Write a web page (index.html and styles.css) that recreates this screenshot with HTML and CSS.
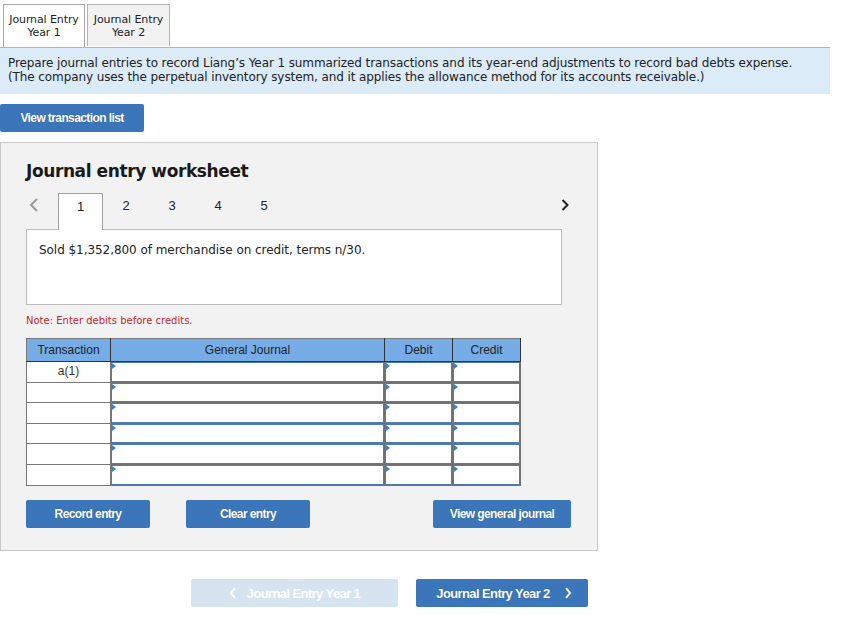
FILE: index.html
```html
<!DOCTYPE html>
<html>
<head>
<meta charset="utf-8">
<link rel="stylesheet" href="styles.css">
</head>
<body>
<div class="tabs">
  <div class="tab active">Journal Entry<br>Year 1</div>
  <div class="tab">Journal Entry<br>Year 2</div>
</div>
<div class="banner">
  Prepare journal entries to record Liang’s Year 1 summarized transactions and its year-end adjustments to record bad debts expense.<br>
  (The company uses the perpetual inventory system, and it applies the allowance method for its accounts receivable.)
</div>
<button class="btn btn-list">View transaction list</button>

<div class="panel">
  <h2 class="title">Journal entry worksheet</h2>
  <div class="pager">
    <span class="chev prev"><svg width="10" height="14" viewBox="0 0 10 14"><polyline points="8,1 2,7 8,13" fill="none" stroke="#9a9a9a" stroke-width="2"/></svg></span>
    <span class="pg current">1</span>
    <span class="pg">2</span>
    <span class="pg">3</span>
    <span class="pg">4</span>
    <span class="pg">5</span>
    <span class="chev next"><svg width="10" height="14" viewBox="0 0 10 14"><polyline points="2.5,2 7.5,7 2.5,12" fill="none" stroke="#222" stroke-width="2"/></svg></span>
  </div>
  <div class="desc">Sold $1,352,800 of merchandise on credit, terms n/30.</div>
  <div class="note">Note: Enter debits before credits.</div>
  <table class="jt">
    <colgroup><col class="c1"><col class="c2"><col class="c3"><col class="c4"></colgroup>
    <thead>
      <tr><th>Transaction</th><th>General Journal</th><th>Debit</th><th>Credit</th></tr>
    </thead>
    <tbody>
      <tr><td class="tr">a(1)</td><td class="in"><div class="box"></div></td><td class="in"><div class="box"></div></td><td class="in"><div class="box"></div></td></tr>
      <tr><td class="tr"></td><td class="in"><div class="box"></div></td><td class="in"><div class="box"></div></td><td class="in"><div class="box"></div></td></tr>
      <tr><td class="tr"></td><td class="in"><div class="box"></div></td><td class="in"><div class="box"></div></td><td class="in"><div class="box"></div></td></tr>
      <tr><td class="tr"></td><td class="in"><div class="box"></div></td><td class="in"><div class="box"></div></td><td class="in"><div class="box"></div></td></tr>
      <tr><td class="tr"></td><td class="in"><div class="box"></div></td><td class="in"><div class="box"></div></td><td class="in"><div class="box"></div></td></tr>
      <tr><td class="tr"></td><td class="in"><div class="box"></div></td><td class="in"><div class="box"></div></td><td class="in"><div class="box"></div></td></tr>
    </tbody>
  </table>
  <div class="actions">
    <button class="btn btn-rec">Record entry</button>
    <button class="btn btn-clr">Clear entry</button>
    <button class="btn btn-view">View general journal</button>
  </div>
</div>

<div class="nav">
  <button class="btn nav-btn disabled"><svg width="8" height="12" viewBox="0 0 8 12"><polyline points="6,1 2,6 6,11" fill="none" stroke="#fff" stroke-width="2"/></svg><span>Journal Entry Year 1</span></button>
  <button class="btn nav-btn next-btn"><span>Journal Entry Year 2</span><svg width="8" height="12" viewBox="0 0 8 12"><polyline points="2,1 6,6 2,11" fill="none" stroke="#fff" stroke-width="2"/></svg></button>
</div>
</body>
</html>
```
FILE: styles.css
```css
body {
  margin: 0;
  font-family: "DejaVu Sans", Verdana, sans-serif;
  font-size: 12px;
  color: #222;
  background: #fff;
  width: 861px;
}
.tabs {
  display: flex;
  gap: 2px;
  padding: 4px 0 0 3px;
  height: 43px;
}
.tab {
  box-sizing: border-box;
  width: 83px;
  height: 42px;
  border: 1px solid #b4b4b4;
  border-bottom: none;
  background: #f2f2f2;
  font-size: 11px;
  line-height: 13px;
  text-align: center;
  padding-top: 8px;
  letter-spacing: -0.1px;
}
.tab.active {
  width: 82px;
  background: #fff;
  height: 43px;
  border-color: #a8a8a8;
}
.banner {
  width: 830px;
  box-sizing: border-box;
  background: #dcebf8;
  border-top: 1px solid #b4b4b4;
  padding: 8px 8px 10px;
  line-height: 14px;
  font-size: 12px;
  letter-spacing: -0.1px;
  height: 47px;
  white-space: nowrap;
}
.btn {
  font-family: "Liberation Sans", Arial, sans-serif;
  font-weight: bold;
  font-size: 12px;
  letter-spacing: -0.6px;
  color: #fff;
  background: #3b76ba;
  border: none;
  border-radius: 2px;
  height: 28px;
  padding: 0;
  text-shadow: 0 0 1px rgba(0,0,0,0.3);
}
.btn-list {
  display: block;
  margin-top: 10px;
  width: 144px;
}
.panel {
  margin-top: 10px;
  width: 598px;
  height: 409px;
  box-sizing: border-box;
  background: #f2f2f2;
  border: 1px solid #c8c8c8;
  padding: 0 0 0 25px;
}
.title {
  margin: 17px 0 0;
  font-size: 17px;
  font-weight: bold;
  line-height: 22px;
  color: #1a1a1a;
  letter-spacing: -0.4px;
}
.pager {
  display: flex;
  align-items: flex-end;
  margin-top: 10px;
  height: 37px;
  width: 544px;
}
.chev {
  display: flex;
  align-items: center;
}
.chev.prev {
  width: 32px;
  padding-left: 3px;
  box-sizing: border-box;
  align-self: flex-start;
  height: 26px;
}
.chev.next {
  margin-left: auto;
  align-self: flex-start;
  height: 26px;
}
.pg {
  width: 46px;
  height: 36px;
  box-sizing: border-box;
  text-align: center;
  line-height: 26px;
  font-family: "Liberation Sans", Arial, sans-serif;
  font-size: 13px;
  color: #222;
}
.pg.current {
  width: 45px;
  background: #fff;
  border: 1px solid #a0a0a0;
  border-bottom: none;
  height: 37px;
  margin-bottom: -1px;
  position: relative;
  z-index: 1;
}
.desc {
  width: 536px;
  height: 76px;
  box-sizing: border-box;
  background: #fff;
  border: 1px solid #bcbcbc;
  padding: 13px 12px;
  font-size: 12px;
  letter-spacing: -0.05px;
}
.note {
  margin-top: 10px;
  font-size: 10px;
  color: #c0282d;
  line-height: 12px;
}
.jt {
  margin-top: 11px;
  border-collapse: collapse;
  font-family: "Liberation Sans", Arial, sans-serif;
  font-size: 12px;
  table-layout: fixed;
  width: 494px;
}
.jt th {
  background: #77ade6;
  height: 22px;
  padding: 0;
  font-weight: normal;
  color: #222;
  border: 1px solid #333;
  border-top-color: #777;
  border-left-color: #777;
}
.c1 { width: 84px; }
.c2 { width: 274px; }
.c3 { width: 68px; }
.c4 { width: 68px; }
.jt td {
  padding: 0;
  background: #fff;
  border: 1px solid #777;
}
.jt td.tr {
  text-align: center;
  color: #333;
  vertical-align: top;
  line-height: 18px;
  height: 19px;
}
.jt td.in {
  border: 1px solid #707070;
}
.box {
  box-sizing: border-box;
  height: 19.6px;
  border: 1.5px solid #4f7db3;
  position: relative;
}
.box::before {
  content: "";
  position: absolute;
  left: 0;
  top: 0;
  border-left: 4px solid #3c7fd0;
  border-top: 3px solid transparent;
  border-bottom: 3px solid transparent;
}
.actions {
  display: flex;
  margin-top: 14px;
  width: 545px;
}
.btn-rec { width: 124px; }
.btn-clr { width: 124px; margin-left: 36px; }
.btn-view { width: 138px; margin-left: auto; }
.nav {
  display: flex;
  gap: 18px;
  padding-left: 191px;
  margin-top: 28px;
}
.nav-btn {
  display: flex;
  align-items: center;
  justify-content: center;
  gap: 10px;
  font-size: 13px;
  letter-spacing: -0.6px;
}
.nav-btn.disabled {
  width: 207px;
  background: #d6e3f1;
  color: #fff;
  text-shadow: none;
}
.next-btn {
  width: 172px;
  gap: 14px;
  padding-left: 4px;
}
```
